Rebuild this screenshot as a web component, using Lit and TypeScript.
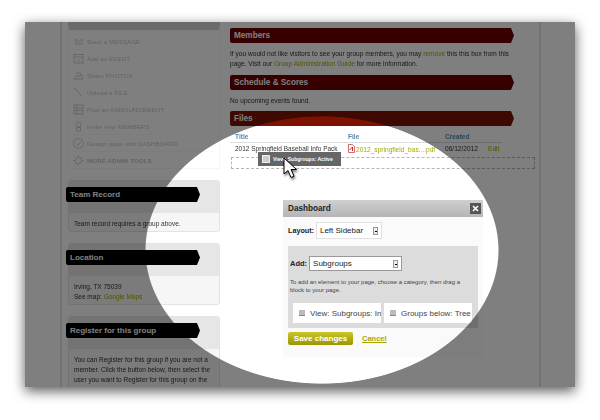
import { LitElement, html, css, svg } from 'lit';
import { customElement } from 'lit/decorators.js';

const rowIcons = [
    svg`<path d="M2 3l2 1 2 2 3-3v5H3z" />`,
    svg`<rect x="1" y="1.5" width="9" height="8.5" /><path d="M1 4h9M3.5 7l1.5 1.5 2.5-3" />`,
    svg`<path d="M1 9l3-4 2 2 2-3 2 5zM3 3h5" />`,
    svg`<path d="M2 1.500l7 8M1 3l2-2" />`,
    svg`<rect x="1" y="1" width="9" height="9" /><path d="M1 4h9M1 6.500h9M4 1v9" />`,
    svg`<circle cx="5.500" cy="3.500" r="2.500" /><path d="M3.500 10V6.500h4V10z" />`,
    svg`<circle cx="5.500" cy="5.500" r="5" /><path d="M3 5.500l2 2 3-4" />`,
    svg`<circle cx="5.500" cy="5.500" r="3" /><path d="M5.500 0v2M5.500 9v2M0 5.500h2M9 5.500h2M1.700 1.700l1.400 1.400M8 8l1.400 1.400M1.700 9.300L3 8M8 3l1.400-1.300" />`,
];

const rows = [
    'Send a MESSAGE',
    'Add an EVENT',
    'Share PHOTOS',
    'Upload a FILE',
    'Post an ANNOUNCEMENT',
    'Invite new MEMBERS',
    'Design page with DASHBOARD',
    'MORE ADMIN TOOLS',
];

@customElement('app-root')
export class AppRoot extends LitElement {
    static styles = css`
    :host {
      display: block;
      width: 600px;
      height: 420px;
      background: #fff;
      overflow: hidden;
      font-family: "Liberation Sans", Arial, sans-serif;
      color: #333;
    }

    .shot {
      padding: 22px 25px 0;
    }

    .frame {
      position: relative;
      width: 550px;
      height: 365px;
      overflow: hidden;
      background: #fff;
      box-shadow: 0 4px 12px rgba(0, 0, 0, 0.65);
      filter: blur(0.25px);
    }

    .page {
      margin-left: 35px;
      width: 481px;
      height: 365px;
      border-left: 2px solid #e4e4e4;
      border-right: 2px solid #e4e4e4;
      box-sizing: border-box;
      display: flex;
      gap: 10px;
      padding-left: 6px;
    }

    .sidebar {
      width: 152px;
      flex: none;
      display: flex;
      flex-direction: column;
      gap: 11px;
    }

    .menu {
      border-top: 8px solid #d6d6d6;
      height: 147px;
      box-sizing: border-box;
      border-left: 1px solid #f6f6f6;
      border-right: 1px solid #f6f6f6;
      border-bottom: 1px solid #f6f6f6;
      padding: 3px 4px 0;
    }

    .menu-row {
      height: 17px;
      display: flex;
      align-items: center;
      gap: 3px;
      border-bottom: 1px solid #f8f8f8;
      box-sizing: border-box;
      font-size: 6.200px;
      color: #c6c6c6;
      letter-spacing: 0.1px;
    }

    .menu-row:last-child {
      border-bottom: none;
      font-weight: bold;
    }

    .menu-row svg {
      width: 11px;
      height: 11px;
      fill: none;
      stroke: #c4c4c4;
      stroke-width: 0.8;
      flex: none;
    }

    .card {
      border-radius: 3px;
      background: #f6f6f6;
      border: 1px solid #e4e4e4;
      box-sizing: border-box;
      font-size: 6.500px;
      line-height: 10px;
    }

    .card-head {
      background: #e6e6e6;
      padding: 6px 0 11px;
      border-radius: 3px 3px 0 0;
    }

    .card-body {
      padding: 6px 5px 5px;
    }

    .tag {
      margin-left: -3px;
      width: 134px;
      height: 15px;
      line-height: 15px;
      background: #000;
      color: #fff;
      font-size: 8px;
      font-weight: bold;
      padding-left: 4px;
      box-sizing: border-box;
      border-radius: 2px 0 0 2px;
      clip-path: polygon(0 0, calc(100% - 3px) 0, 100% 50%, calc(100% - 3px) 100%, 0 100%);
    }

    a {
      color: #a8a800;
      text-decoration: none;
    }

    .main {
      width: 284px;
      flex: none;
      padding-top: 6px;
      font-size: 6.600px;
      line-height: 10px;
    }

    .band {
      height: 15px;
      line-height: 15px;
      background: #6e0000;
      color: #fff;
      font-size: 8.200px;
      font-weight: bold;
      padding-left: 4px;
      border-radius: 2px 0 0 2px;
      clip-path: polygon(0 0, calc(100% - 3px) 0, 100% 50%, calc(100% - 3px) 100%, 0 100%);
    }

    .band.files {
      background: #7d1200;
    }

    .main p {
      margin: 6px 0 6px;
      white-space: nowrap;
    }

    .main p.empty {
      margin-bottom: 5px;
    }

    .table-head {
      display: grid;
      grid-template-columns: 113px 97px 1fr;
      padding: 6px 0 0 5px;
      font-weight: bold;
      color: #5b87a8;
      border-bottom: 1px solid #ddd;
      width: 272px;
      box-sizing: border-box;
    }

    .table-row {
      display: grid;
      grid-template-columns: 113px 97px 43px 1fr;
      padding: 1px 0 0 5px;
      width: 284px;
      box-sizing: border-box;
      white-space: nowrap;
    }

    .title {
      font-size: 6.500px;
    }

    .pdf {
      display: inline-block;
      width: 7px;
      height: 9px;
      vertical-align: -1px;
      margin-right: 1px;
    }

    .drop {
      margin: 2px 0 0 1px;
      width: 304px;
      height: 12px;
      box-sizing: border-box;
      border: 1px dashed #b5b5b5;
    }

    .drag {
      position: absolute;
      left: 233px;
      top: 130px;
      width: 83px;
      height: 14px;
      background: #666;
      color: #fff;
      font-size: 5.100px;
      font-weight: bold;
      display: flex;
      align-items: center;
      gap: 3px;
      padding-left: 4px;
      box-sizing: border-box;
    }

    .drag i {
      width: 6px;
      height: 6px;
      background: #ccc;
      border: 1px solid #eee;
    }

    .cursor {
      position: absolute;
      left: 258px;
      top: 135px;
      width: 14px;
      height: 22px;
      filter: drop-shadow(1px 2px 1px rgba(0, 0, 0, 0.5));
    }

    .modal {
      position: absolute;
      left: 258px;
      top: 178px;
      width: 200px;
      height: 157px;
      background: #fafafa;
      color: #222;
      font-size: 6.300px;
    }

    .modal-head {
      height: 17px;
      background: linear-gradient(#cfcfcf, #b5b5b5);
      display: flex;
      align-items: center;
      justify-content: space-between;
      padding: 0 2px 0 5px;
      font-size: 8.200px;
      font-weight: bold;
    }

    .close {
      width: 11px;
      height: 11px;
      background: #555;
      display: block;
    }

    .layout-row {
      height: 29px;
      display: flex;
      align-items: center;
      gap: 2px;
      padding: 0 0 2px 5px;
      box-sizing: border-box;
      font-size: 7.200px;
      font-weight: bold;
    }

    .select {
      box-sizing: border-box;
      background: #fff;
      border: 1px solid #e2e2e2;
      display: flex;
      align-items: center;
      justify-content: space-between;
      font-weight: normal;
      font-size: 8px;
      padding: 0 3px 0 3px;
    }

    .select b {
      width: 5px;
      height: 8px;
      background: #eee;
      border: 1px solid #999;
      box-sizing: border-box;
      position: relative;
    }

    .select b::after {
      content: "";
      position: absolute;
      left: 1px;
      top: 3px;
      width: 2px;
      height: 1px;
      background: #000;
    }

    .layout-select {
      width: 66px;
      height: 17px;
    }

    .panel {
      margin: 0 5px;
      height: 82px;
      background: #dcdcdc;
      padding: 10px 2px 0;
      box-sizing: border-box;
    }

    .add-row {
      display: flex;
      align-items: center;
      gap: 2px;
      font-size: 7.500px;
      font-weight: bold;
    }

    .add-select {
      width: 93px;
      height: 15px;
      border-color: #999;
    }

    .hint {
      margin-top: 7px;
      line-height: 8px;
      font-size: 6px;
      color: #444;
    }

    .tiles {
      display: flex;
      gap: 3px;
      margin: 9px 0 0 3px;
    }

    .tile {
      width: 88px;
      height: 20px;
      background: #fff;
      box-sizing: border-box;
      font-size: 8px;
      color: #444;
      display: flex;
      align-items: center;
      gap: 5px;
      padding-left: 6px;
      white-space: nowrap;
      overflow: hidden;
    }

    .tile i {
      width: 6px;
      height: 5px;
      flex: none;
      background: #bbb;
      border-bottom: 1px solid #888;
    }

    .actions {
      display: flex;
      align-items: center;
      gap: 9px;
      margin: 4px 0 0 5px;
    }

    .save {
      width: 65px;
      height: 13px;
      border-radius: 2px;
      background: linear-gradient(#c9c62a, #9c9600);
      color: #fff;
      font-size: 8px;
      font-weight: bold;
      text-align: center;
      line-height: 13px;
    }

    .cancel {
      font-size: 7.500px;
      font-weight: bold;
      text-decoration: underline;
    }

    .dim {
      position: absolute;
      inset: 0;
      background: radial-gradient(177px 134px at 297px 228px, transparent 99.4%, rgba(0, 0, 0, 0.5) 100%);
    }
    `;

    render() {
        return html`
      <div class="shot">
        <div class="frame">
          <div class="page">
            <div class="sidebar">
              <div class="menu">
                ${rows.map((label, i) => html`
                  <div class="menu-row">
                    <svg viewBox="0 0 11 11">${rowIcons[i]}</svg>${label}
                  </div>`)}
              </div>
              <div class="card" style="height:52px">
                <div class="card-head"><div class="tag">Team Record</div></div>
                <div class="card-body">Team record requires a group above.</div>
              </div>
              <div class="card" style="height:62px">
                <div class="card-head"><div class="tag">Location</div></div>
                <div class="card-body">Irving, TX 75039<br />See map: <a>Google Maps</a></div>
              </div>
              <div class="card" style="height:100px">
                <div class="card-head"><div class="tag">Register for this group</div></div>
                <div class="card-body">You can Register for this group if you are not a member. Click the button below, then select the user you want to Register for this group on the next page.</div>
              </div>
            </div>
            <div class="main">
              <div class="band">Members</div>
              <p>If you would not like visitors to see your group members, you may <a>remove</a> this this box from this<br />page. Visit our <a>Group Administration Guide</a> for more information.</p>
              <div class="band">Schedule &amp; Scores</div>
              <p class="empty">No upcoming events found.</p>
              <div class="band files">Files</div>
              <div class="table-head"><span>Title</span><span>File</span><span>Created</span></div>
              <div class="table-row">
                <span class="title">2012 Springfield Baseball Info Pack</span>
                <span><svg class="pdf" viewBox="0 0 7 9"><path d="M.5.500h4l2 2v6h-6z" fill="#fff" stroke="#b33" stroke-width=".7" /><path d="M1.500 6l3-3v4" fill="none" stroke="#c22" /></svg><a>2012_springfield_bas....pdf</a></span>
                <span>06/12/2012</span>
                <a>Edit</a>
              </div>
              <div class="drop"></div>
            </div>
          </div>

          <div class="drag"><i></i>View: Subgroups: Active</div>
          <svg class="cursor" viewBox="0 0 14 22">
            <path d="M1 1v16l4-3.500 3 7 3-1.300-3-6.700h5.500z" fill="#fff" stroke="#000" stroke-width="1" />
          </svg>

          <div class="modal">
            <div class="modal-head">Dashboard
              <svg class="close" viewBox="0 0 11 11"><path d="M3 3l5 5M8 3l-5 5" stroke="#fff" stroke-width="1.600" /></svg>
            </div>
            <div class="layout-row">Layout:
              <div class="select layout-select">Left Sidebar<b></b></div>
            </div>
            <div class="panel">
              <div class="add-row">Add:
                <div class="select add-select">Subgroups<b></b></div>
              </div>
              <div class="hint">To add an element to your page, choose a category, then drag a<br />block to your page.</div>
              <div class="tiles">
                <div class="tile"><i></i>View: Subgroups: In</div>
                <div class="tile"><i></i>Groups below: Tree</div>
              </div>
            </div>
            <div class="actions">
              <div class="save">Save changes</div>
              <a class="cancel">Cancel</a>
            </div>
          </div>

          <div class="dim"></div>
        </div>
      </div>
    `;
    }
}

declare global {
    interface HTMLElementTagNameMap {
        'app-root': AppRoot;
    }
}
